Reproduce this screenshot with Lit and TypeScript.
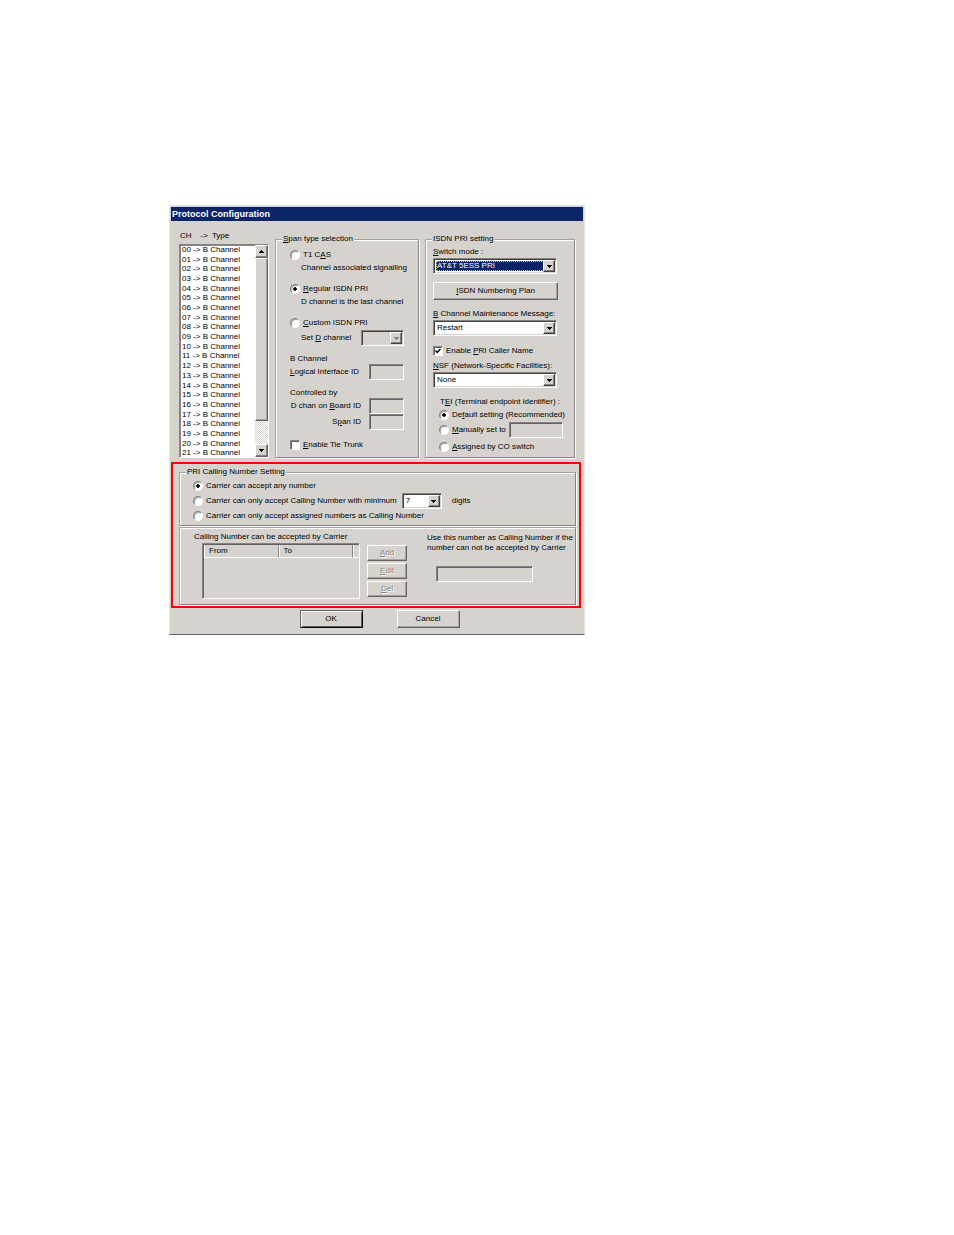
import { LitElement, html, css } from "lit";
import { customElement, property } from "lit/decorators.js";

const arrow = (up = false) => html`<svg class="arrow" viewBox="0 0 5 3" width="5" height="3" aria-hidden="true">
  <path d=${up ? "M0 3 L2.5 0 L5 3 Z" : "M0 0 L5 0 L2.5 3 Z"} fill="currentColor"></path>
</svg>`;

const base = css`
  *, *::before, *::after { box-sizing: border-box; }
  :host {
    --face: #d6d3ce;
    --dark: #848284;
    --navy: #0a246a;
    font: 8px/12px "Liberation Sans", Arial, sans-serif;
    color: #000;
  }
  .arrow { display: block; shape-rendering: crispEdges; }
`;

@customElement("combo-box")
export class ComboBox extends LitElement {
  @property() value = "";
  @property() label = "";
  @property({ type: Boolean }) disabled = false;
  @property({ type: Boolean }) active = false;

  static styles = [base, css`
    :host { display: block; }
    .box {
      position: relative;
      height: 16px;
      border: 1px solid;
      border-color: var(--dark) #fff #fff var(--dark);
      box-shadow: inset 1px 1px #424142, inset -1px -1px var(--face);
      background: #fff;
      padding: 2px;
    }
    .box.off { background: var(--face); }
    select {
      appearance: none;
      display: block;
      width: 100%;
      height: 100%;
      margin: 0;
      padding: 0 14px 0 1px;
      border: 0;
      border-radius: 0;
      outline: 0;
      background: transparent;
      color: inherit;
      font: inherit;
      line-height: 10px;
    }
    .active select {
      background: var(--navy);
      color: #fff;
      outline: 1px dotted #d8c870;
      outline-offset: -1px;
    }
    .drop {
      position: absolute;
      top: 1px;
      right: 1px;
      bottom: 1px;
      width: 12px;
      display: grid;
      place-items: center;
      pointer-events: none;
      background: var(--face);
      border: 1px solid;
      border-color: #fff #424142 #424142 #fff;
      box-shadow: inset -1px -1px var(--dark);
    }
    .off .drop { color: var(--dark); }
  `];

  render() {
    const cls = "box" + (this.disabled ? " off" : "") + (this.active ? " active" : "");
    return html`<div class=${cls}>
      <select aria-label=${this.label} ?disabled=${this.disabled}>
        <option>${this.value}</option>
      </select>
      <span class="drop">${arrow()}</span>
    </div>`;
  }
}

@customElement("app-root")
export class AppRoot extends LitElement {
  static styles = [base, css`
    :host { display: block; padding: 205px 24px 24px 169px; }
    .dialog {
      width: 100%;
      max-width: 416px;
      background: var(--face);
      border: 1px solid;
      border-color: #e7e5e2 #e7e5e2 #636163 #e7e5e2;
      padding-bottom: 6px;
    }
    .title {
      margin: 1px 1px 0;
      padding: 0 1px;
      height: 14px;
      background: var(--navy);
      color: #fff;
      font-size: 9px;
      font-weight: bold;
      line-height: 15px;
    }
    .top {
      display: grid;
      grid-template-columns: 90px minmax(0, 1fr) 150px;
      gap: 6px;
      padding: 9px 9px 0;
    }
    .top fieldset { margin-top: 3px; }
    .list { display: flex; flex-direction: column; }
    .head { display: flex; gap: 9px; height: 14px; padding-left: 1px; }
    .head span:nth-child(2) { margin-right: -5px; }
    .frame {
      flex: 1;
      min-height: 0;
      display: flex;
      background: #fff;
      border: 1px solid;
      border-color: var(--dark) #fff #fff var(--dark);
      box-shadow: inset 1px 1px #848284;
      overflow: hidden;
    }
    ul {
      flex: 1;
      display: grid;
      grid-template-rows: repeat(22, minmax(0, 1fr));
      height: 213px;
      margin: 0 0 -1px;
      padding: 0 0 0 2px;
      list-style: none;
      line-height: 10px;
      white-space: nowrap;
    }
    .bar {
      width: 13px;
      display: flex;
      flex-direction: column;
      background: repeating-conic-gradient(#fff 0 25%, var(--face) 0 50%) 0 0 / 2px 2px;
    }
    .raised {
      border: 1px solid;
      border-color: #fff #636163 #636163 #fff;
      background: var(--face);
      box-shadow: inset -1px -1px #a5a2a5;
    }
    .bar button { height: 13px; padding: 0; display: grid; place-items: center; box-shadow: inset -1px -1px #848284; }
    .thumb { height: 163px; }
    .track { flex: 1; }
    fieldset {
      min-width: 0;
      margin: 0;
      padding: 0;
      border: 1px solid var(--dark);
      border-color: #a5a2a5 var(--dark) var(--dark) #a5a2a5;
      box-shadow: inset 1px 1px #fff, 1px 1px #fff;
    }
    legend {
      margin-left: 6px;
      padding: 0 1px;
      line-height: 12px;
      background: var(--face);
    }
    .span-body {
      display: flex;
      flex-direction: column;
      gap: 8px;
      padding: 3px 14px 3px;
    }
    .pri-body {
      display: flex;
      flex-direction: column;
      gap: 8px;
      padding: 1px 7px 2px;
    }
    .wide { width: 124px; }
    .pair { display: flex; flex-direction: column; gap: 2px; }
    .choice {
      display: flex;
      align-items: center;
      gap: 3px;
      min-height: 14px;
      line-height: 12px;
      white-space: nowrap;
    }
    .sub { margin-left: 11px; white-space: nowrap; }
    .row { display: flex; align-items: center; justify-content: space-between; height: 16px; white-space: nowrap; }
    .row.end { justify-content: flex-end; gap: 8px; }
    .tight { line-height: 10px; }
    .narrow { width: 43px; }
    input { margin: 0; font: inherit; flex: none; }
    input[type="text"] {
      height: 16px;
      padding: 0 2px;
      border: 1px solid;
      border-color: var(--dark) #fff #fff var(--dark);
      border-radius: 0;
      box-shadow: inset 1px 1px #636163;
      background: var(--face);
    }
    .id { width: 35px; }
    .manual { width: 54px; }
    input[type="radio"] {
      appearance: none;
      width: 10px;
      height: 10px;
      border: 1px solid;
      border-color: var(--dark) #fff #fff var(--dark);
      border-radius: 50%;
      background: #fff;
      box-shadow: inset 1px 1px #a5a2a5;
    }
    input[type="radio"]:checked {
      background: radial-gradient(circle, #000 0 1.5px, #fff 2px);
    }
    .tick { position: relative; display: flex; }
    input[type="checkbox"] {
      appearance: none;
      width: 10px;
      height: 10px;
      border: 1px solid;
      border-color: var(--dark) #fff #fff var(--dark);
      background: #fff;
      box-shadow: inset 1px 1px #636163;
    }
    .tick svg { position: absolute; inset: 2px; pointer-events: none; }
    button { margin: 0; font: inherit; color: inherit; border-radius: 0; }
    .plan { width: 125px; height: 18px; padding: 0; }
    .tei { padding-left: 6px; }
    .tei .name { padding-left: 1px; white-space: nowrap; }
    .tei .choice:last-child { margin-top: 2px; }

    .marked {
      margin: 4px 3px 0 1px;
      padding: 2px 3px 1px 6px;
      border: 2px solid #f00;
    }
    .calling { padding: 1px 13px 2px; }
    .minimum { height: 16px; display: flex; align-items: center; gap: 5px; white-space: nowrap; }
    .unit { padding-left: 5px; }
    .digits { width: 40px; }
    .accept {
      display: grid;
      grid-template-columns: 213px minmax(0, 1fr);
      gap: 20px;
      margin-top: 1px;
      padding: 3px 0 5px 14px;
      border: 1px solid var(--dark);
      border-color: #a5a2a5 var(--dark) var(--dark) #a5a2a5;
      box-shadow: inset 1px 1px #fff, 1px 1px #fff;
    }
    .numbers { display: grid; grid-template-columns: 1fr 40px; gap: 7px; padding-left: 8px; }
    .grid {
      height: 56px;
      border: 1px solid;
      border-color: var(--dark) #fff #fff var(--dark);
      box-shadow: inset 1px 1px #636163;
      padding: 1px;
    }
    table { width: 100%; border-collapse: separate; border-spacing: 0; table-layout: fixed; }
    th {
      height: 13px;
      padding: 0 5px;
      text-align: left;
      font-weight: normal;
      line-height: 12px;
      border-right: 1px solid var(--dark);
      border-bottom: 1px solid #fff;
      box-shadow: inset 1px 0 #fff;
    }
    th:last-child { border-right: 0; padding: 0; width: 5px; }
    .acts { display: flex; flex-direction: column; gap: 2px; padding-top: 2px; }
    .acts button { height: 16px; padding: 0; line-height: 12px; color: var(--dark); text-shadow: 1px 1px #fff; }
    .fallback { padding-top: 2px; line-height: 10px; display: flex; flex-direction: column; gap: 13px; white-space: nowrap; }
    .fallback input { width: 97px; margin-left: 9px; }
    .footer { display: flex; justify-content: center; gap: 34px; padding: 2px 0 0 5px; }
    .footer button { width: 63px; height: 18px; padding: 0; }
    .footer .default { border-color: #636163 #000 #000 #636163; box-shadow: inset 1px 1px #fff, inset -1px -1px #636163; }
  `];

  render() {
    const channels = Array.from({ length: 22 }, (_, i) => String(i).padStart(2, "0"));
    return html`
      <main class="dialog" role="dialog" aria-labelledby="caption">
        <div class="title" id="caption">Protocol Configuration</div>
        <div class="top">
          <div class="list">
            <div class="head"><span>CH</span><span>-&gt;</span><span>Type</span></div>
            <div class="frame">
              <ul role="listbox" aria-label="Channel type">
                ${channels.map((n) => html`<li role="option">${n} -&gt; B Channel</li>`)}
              </ul>
              <div class="bar">
                <button class="raised" aria-label="Scroll up">${arrow(true)}</button>
                <div class="thumb raised"></div>
                <div class="track"></div>
                <button class="raised" aria-label="Scroll down">${arrow()}</button>
              </div>
            </div>
          </div>

          <fieldset>
            <legend><u>S</u>pan type selection</legend>
            <div class="span-body">
              <div>
                <label class="choice"><input type="radio" name="span"><span>T1 C<u>A</u>S</span></label>
                <div class="sub">Channel associated signalling</div>
              </div>
              <div>
                <label class="choice"><input type="radio" name="span" checked><span><u>R</u>egular ISDN PRI</span></label>
                <div class="sub">D channel is the last channel</div>
              </div>
              <div>
                <label class="choice"><input type="radio" name="span"><span><u>C</u>ustom ISDN PRI</span></label>
                <div class="row sub"><span>Set <u>D</u> channel</span><combo-box class="narrow" label="Set D channel" disabled></combo-box></div>
              </div>
              <div>
                <div class="tight">B Channel</div>
                <div class="row"><label for="logical"><u>L</u>ogical Interface ID</label><input class="id" id="logical" type="text" disabled></div>
              </div>
              <div>
                <div class="tight">Controlled by</div>
                <div class="row end"><label for="board">D chan on <u>B</u>oard ID</label><input class="id" id="board" type="text" disabled></div>
                <div class="row end"><label for="spanid">S<u>p</u>an ID</label><input class="id" id="spanid" type="text" disabled></div>
              </div>
              <label class="choice"><span class="tick"><input type="checkbox"></span><span><u>E</u>nable Tie Trunk</span></label>
            </div>
          </fieldset>

          <fieldset>
            <legend>ISDN PRI setting</legend>
            <div class="pri-body">
              <div>
                <div><u>S</u>witch mode :</div>
                <combo-box class="wide" label="Switch mode" value="AT&amp;T 5ESS PRI" active></combo-box>
              </div>
              <button class="plan raised"><u>I</u>SDN Numbering Plan</button>
              <div>
                <div><u>B</u> Channel Maintenance Message:</div>
                <combo-box class="wide" label="B Channel Maintenance Message" value="Restart"></combo-box>
              </div>
              <div class="pair">
                <label class="choice"><span class="tick"><input type="checkbox" checked><svg viewBox="0 0 6 6" width="6" height="6"><path d="M0.5 2.5 L2.2 4.4 L5.5 1" fill="none" stroke="#000" stroke-width="1.5"></path></svg></span><span>Enable <u>P</u>RI Caller Name</span></label>
                <div>
                  <div><u>N</u>SF (Network-Specific Facilities):</div>
                  <combo-box class="wide" label="Network-Specific Facilities" value="None"></combo-box>
                </div>
              </div>
              <div class="tei" role="radiogroup" aria-label="Terminal endpoint identifier">
                <div class="name">T<u>E</u>I (Terminal endpoint identifier) :</div>
                <label class="choice"><input type="radio" name="tei" checked><span>De<u>f</u>ault setting (Recommended)</span></label>
                <div class="choice"><input type="radio" name="tei" id="manual"><label for="manual"><u>M</u>anually set to</label><input class="manual" type="text" aria-label="Manual identifier" disabled></div>
                <label class="choice"><input type="radio" name="tei"><span><u>A</u>ssigned by CO switch</span></label>
              </div>
            </div>
          </fieldset>
        </div>

        <section class="marked">
          <fieldset>
            <legend>PRI Calling Number Setting</legend>
            <div class="calling">
              <label class="choice"><input type="radio" name="calling" checked><span>Carrier can accept any number</span></label>
              <div class="minimum">
                <label class="choice"><input type="radio" name="calling"><span>Carrier can only accept Calling Number with minimum</span></label>
                <combo-box class="digits" label="Minimum digits" value="7"></combo-box>
                <span class="unit">digits</span>
              </div>
              <label class="choice"><input type="radio" name="calling"><span>Carrier can only accept assigned numbers as Calling Number</span></label>
            </div>
          </fieldset>
          <div class="accept">
            <div>
              <div>Calling Number can be accepted by Carrier</div>
              <div class="numbers">
                <div class="grid">
                  <table>
                    <thead><tr><th>From</th><th>To</th><th aria-label="Spare"></th></tr></thead>
                  </table>
                </div>
                <div class="acts">
                  <button class="raised" disabled><u>A</u>dd</button>
                  <button class="raised" disabled><u>E</u>dit</button>
                  <button class="raised" disabled><u>D</u>el</button>
                </div>
              </div>
            </div>
            <div class="fallback">
              <label for="fallback">Use this number as Calling Number if the<br>number can not be accepted by Carrier</label>
              <input id="fallback" type="text" disabled>
            </div>
          </div>
        </section>

        <div class="footer">
          <button class="raised default">OK</button>
          <button class="raised">Cancel</button>
        </div>
      </main>
    `;
  }
}
